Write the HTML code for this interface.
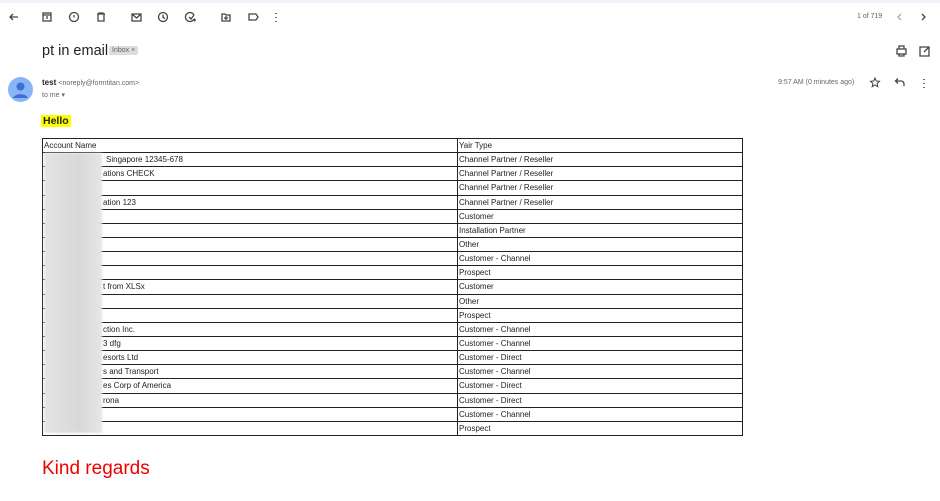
<html><head><style>
body{margin:0;width:940px;height:501px;background:#fff;font-family:"Liberation Sans",sans-serif;position:relative;overflow:hidden}
.a{position:absolute}
.r{position:absolute;left:42px;width:699px;height:13px;border:1px solid #222;border-bottom:none;font-size:8px;color:#222;line-height:14px}
.r span{position:absolute;left:2px}
.r b{font-weight:normal;position:absolute;left:416px}
.r i{position:absolute;left:414px;top:0;bottom:0;border-left:1px solid #222}
</style></head><body>
<div class="a" style="left:0;top:0;width:940px;height:3px;background:#f0f4fa"></div>
<svg class="a" style="left:0;top:0" width="940" height="100" fill="none" stroke="#444" stroke-width="1.3">
<path d="M18 17h-8M13 14l-3 3 3 3"/>
<rect x="43" y="13" width="8" height="8"/><path d="M43 15h8M47 16v3"/>
<circle cx="74" cy="17" r="4.5"/><path d="M74 15v2.5"/>
<path d="M97 14h8M99 14v-1h4v1M98 14v7h6v-7"/>
<rect x="132" y="14" width="9" height="7"/><path d="M132 14l4.5 4 4.5-4"/>
<circle cx="163" cy="17" r="4.5"/><path d="M163 14.5v3l2 1"/>
<path d="M194 15a4.5 4.5 0 1 0 0 4M189 17l2 2 3-4M193 20h3M194.5 18.5v3"/>
<path d="M222 14h3l1 1h4v6h-8z M226 16v4M224 18h4"/>
<path d="M249 14h7l2 3-2 3h-7z"/>
<path d="M276 13v1M276 17v1M276 21v1" stroke-width="1.6"/>
<path d="M901 14l-3 3 3 3" stroke="#aaa"/><path d="M922 14l3 3-3 3"/>
<rect x="897" y="49" width="9" height="5"/><path d="M899 49v-3h5v3M899 54v2h5v-2"/>
<path d="M925 47h-5v9h9v-5M924 47h5v5M929 47l-5 5"/>
<path d="M875 78l1.3 3 3.2.3-2.4 2.2.7 3.2-2.8-1.7-2.8 1.7.7-3.2-2.4-2.2 3.2-.3z" stroke-width="1"/>
<path d="M904 86v-2a3 3 0 0 0-3-3h-5M898 78.5l-2.5 2.5 2.5 2.5"/>
<path d="M924 79v1M924 83v1M924 87v1" stroke-width="1.6"/>
</svg>
<div class="a" style="left:857px;top:13px;font-size:7px;color:#666">1 of 719</div>
<div class="a" style="left:42px;top:43px;font-size:14.5px;color:#222">pt in email</div>
<div class="a" style="left:109px;top:46px;background:#ddd;color:#666;font-size:7px;padding:1px 3px;border-radius:2px">Inbox ×</div>
<svg class="a" style="left:8px;top:77px" width="25" height="25"><circle cx="12.5" cy="12.5" r="12.5" fill="#8ab4f8"/><circle cx="12.5" cy="9.5" r="4" fill="#3b6fd4"/><path d="M5 21a8 6 0 0 1 15 0" fill="#3b6fd4"/></svg>
<div class="a" style="left:42px;top:78px;font-size:8px;color:#222;font-weight:bold">test <span style="font-weight:normal;color:#666;font-size:7px">&lt;noreply@formtitan.com&gt;</span></div>
<div class="a" style="left:42px;top:91px;font-size:7px;color:#666">to me ▾</div>
<div class="a" style="left:778px;top:79px;font-size:7px;color:#666">9:57 AM (0 minutes ago)</div>
<div class="a" style="left:41px;top:115px;background:#ff0;font-size:10.5px;font-weight:bold;padding:0 2px;color:#222">Hello</div>
<div id="t"></div>
<div class="a" style="left:42px;top:435px;width:701px;border-top:1px solid #222"></div>
<div class="a" style="left:44px;top:153px;width:58px;height:280px;background:linear-gradient(90deg,#e4e4e4,#d8d8d8 60%,#e6e6e6);filter:blur(1px)"></div>
<div class="a" style="left:42px;top:458px;font-size:19px;color:#e00">Kind regards</div>
<script>
var L=["Account Name","Singapore 12345-678","ations CHECK","","ation 123","","","","","","t from XLSx","","","ction Inc.","3 dfg","esorts Ltd","s and Transport","es Corp of America","rona","",""];
var R=["Yair Type","Channel Partner / Reseller","Channel Partner / Reseller","Channel Partner / Reseller","Channel Partner / Reseller","Customer","Installation Partner","Other","Customer - Channel","Prospect","Customer","Other","Prospect","Customer - Channel","Customer - Channel","Customer - Direct","Customer - Channel","Customer - Direct","Customer - Direct","Customer - Channel","Prospect"];
var h="";for(var i=0;i<21;i++){var t=Math.round(138+i*14.14);var nt=Math.round(138+(i+1)*14.14);var x=i==0?1:(i==1?63:60);h+='<div class="r" style="top:'+t+'px;height:'+(nt-t-1)+'px"><span style="left:'+x+'px">'+L[i]+'</span><i></i><b>'+R[i]+'</b></div>';}
document.getElementById("t").innerHTML=h;
</script>
</body></html>
